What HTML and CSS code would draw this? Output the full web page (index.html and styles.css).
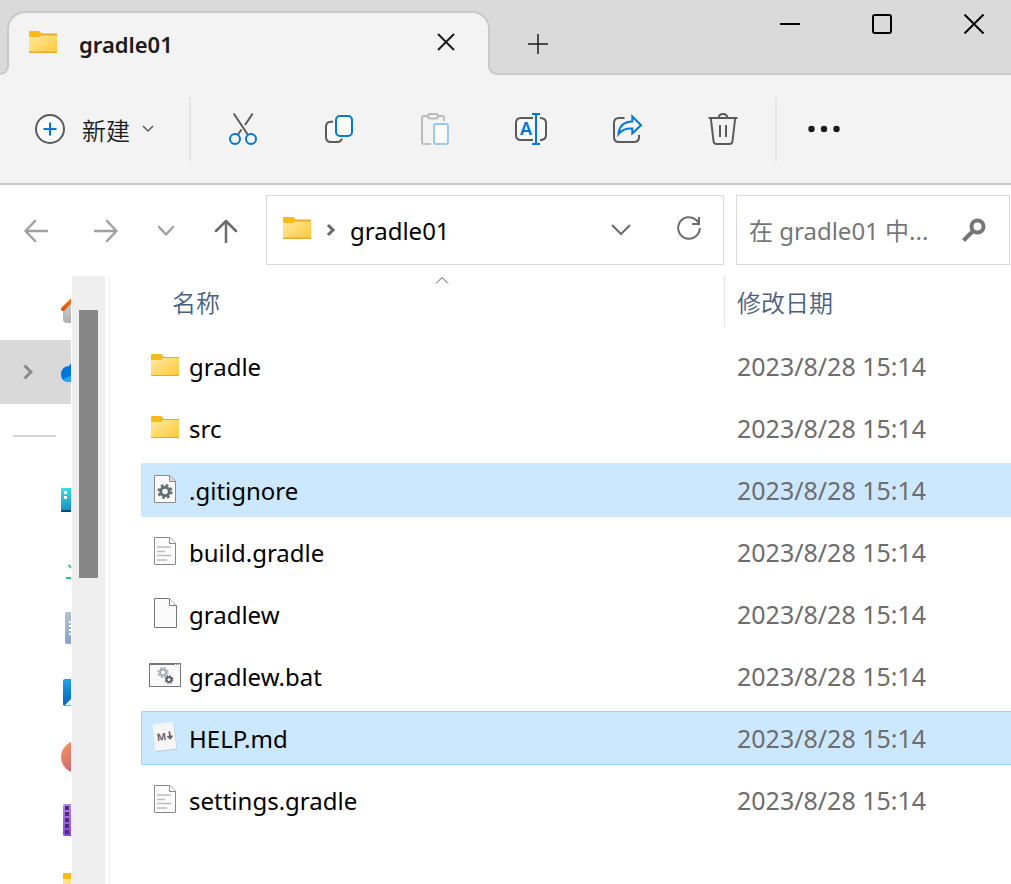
FILE: index.html
```html
<!DOCTYPE html>
<html lang="zh-CN">
<head>
<meta charset="utf-8">
<title>gradle01</title>
<link rel="stylesheet" href="styles.css">
</head>
<body>
<svg class="defs" aria-hidden="true">
  <defs>
    <linearGradient id="gold" x1="0" y1="0" x2="1" y2="1"><stop offset="0" stop-color="#ffe9a2"/><stop offset="1" stop-color="#ffc937"/></linearGradient>
    <linearGradient id="roof" x1="0" y1="1" x2="1" y2="0"><stop offset="0" stop-color="#dd5a0b"/><stop offset="1" stop-color="#ff9a1e"/></linearGradient>
    <linearGradient id="wall" x1="0" y1="0" x2="0" y2="1"><stop offset="0" stop-color="#d6d6d6"/><stop offset="1" stop-color="#b0b0b0"/></linearGradient>
    <linearGradient id="teal" x1="0" y1="0" x2="0.4" y2="1"><stop offset="0" stop-color="#3fe0e8"/><stop offset="1" stop-color="#1583c0"/></linearGradient>
    <linearGradient id="steel" x1="0" y1="0" x2="0" y2="1"><stop offset="0" stop-color="#b4c3d6"/><stop offset="1" stop-color="#88a4c4"/></linearGradient>
    <linearGradient id="sky" x1="0" y1="0" x2="0" y2="1"><stop offset="0" stop-color="#1fa0e6"/><stop offset="1" stop-color="#0a62b8"/></linearGradient>
    <linearGradient id="coral" x1="0" y1="0" x2="1" y2="1"><stop offset="0" stop-color="#f59a5c"/><stop offset="1" stop-color="#b74a86"/></linearGradient>
    <linearGradient id="violet" x1="0" y1="0" x2="0" y2="1"><stop offset="0" stop-color="#bb80f5"/><stop offset="1" stop-color="#8a44e0"/></linearGradient>
    <symbol id="folder" viewBox="0 0 28 22">
      <path d="M0 1q0-1 1-1h8.500q1 0 1.700.8l1.800 2.200h14q1 0 1 1v4H0z" fill="#f9b919"/>
      <path d="M0 6h9.500q1 0 1.700-.8l1.300-1.700h14.500q1 0 1 1V21q0 1-1 1H1q-1 0-1-1z" fill="url(#gold)"/>
      <path d="M12.500 3.500H28M0 21.500h28" stroke="#e8a92c" fill="none"/>
    </symbol>
    <symbol id="textfile" viewBox="0 0 22 28">
      <path d="M.5.500h15.500l5.500 5.500v21.500H.5z" fill="#fbfbfb" stroke="#8a8a8a"/>
      <path d="M15.500.500v6h6" fill="#fff" stroke="#8a8a8a"/>
      <path d="M3 10h14M3 14.500h8M3 18.500h14M3 23h10" stroke="#bdbdbd" stroke-width="1.500"/>
    </symbol>
  </defs>
</svg>

<header class="titlebar">
  <div class="edge edge-left"></div>
  <div class="tab">
    <svg class="folder" aria-hidden="true"><use href="#folder"/></svg>
    <span class="tab-title">gradle01</span>
    <button class="tab-close" aria-label="关闭标签页"><svg width="18" height="18" viewBox="0 0 18 18"><path d="M1 1l16 16M17 1L1 17"/></svg></button>
  </div>
  <div class="edge edge-right">
    <button class="new-tab" aria-label="新标签页"><svg width="20" height="20" viewBox="0 0 20 20"><path d="M10 0v20M0 10h20"/></svg></button>
  </div>
  <div class="controls">
    <button aria-label="最小化"><svg width="20" height="20" viewBox="0 0 20 20"><path d="M0 10h20"/></svg></button>
    <button aria-label="最大化"><svg width="20" height="20" viewBox="0 0 20 20"><rect x="1" y="1" width="18" height="18" rx="2"/></svg></button>
    <button class="close" aria-label="关闭"><svg width="20" height="20" viewBox="0 0 20 20"><path d="M.5.500l19 19M19.500.500l-19 19"/></svg></button>
  </div>
</header>

<div class="toolbar" role="toolbar">
  <button class="new">
    <svg width="30" height="30" viewBox="0 0 30 30"><circle cx="15" cy="15" r="14" fill="#fbfbfb"/><path class="blue" d="M15 8.500v13M8.500 15h13"/></svg>
    <span>新建</span>
    <svg class="thin" width="12" height="8" viewBox="0 0 12 8"><path d="M1 1l5 5 5-5"/></svg>
  </button>
  <span class="divider"></span>
  <button class="tool" aria-label="剪切"><svg width="32" height="32" viewBox="0 0 32 32"><path d="M6.700.500l14 21M25.700.500L18 12M14.500 16.500l-3.500 5"/><g class="blue"><circle cx="8" cy="26" r="5"/><circle cx="24" cy="26" r="5"/></g></svg></button>
  <button class="tool" aria-label="复制"><svg width="32" height="32" viewBox="0 0 32 32"><path fill="#fbfbfb" d="M10 8.700H8q-5 0-5 5V24q0 5 5 5h6q4 0 5-3.500"/><rect class="blue" x="13" y="3" width="16" height="20" rx="4" fill="#fbfbfb"/></svg></button>
  <button class="tool off" aria-label="粘贴" disabled><svg width="32" height="32" viewBox="0 0 32 32"><path d="M9 3H5q-2 0-2 2v24q0 2 2 2h7M19.500 3H23q2 0 2 2v3"/><rect x="9" y="1" width="10" height="4.500" rx="2.200"/><rect class="blue" x="15" y="11" width="14" height="20" rx="2" fill="#fbfbfb"/></svg></button>
  <button class="tool" aria-label="重命名"><svg width="32" height="32" viewBox="0 0 32 32"><path fill="#fbfbfb" d="M18 5H6q-5 0-5 5v12q0 5 5 5h12M25 5q6 0 6 5v12q0 5-6 5"/><path class="blue" d="M21 1v30M17 1h8M17 31h8"/><text x="11" y="22" text-anchor="middle">A</text></svg></button>
  <button class="tool" aria-label="共享"><svg width="32" height="32" viewBox="0 0 32 32"><path d="M13.500 5H8q-5 0-5 5v14q0 5 5 5h15q5 0 5-5v-2"/><path class="blue" fill="#fbfbfb" d="M21.300 3.500L30 12.200 21.300 20.500v-5Q12 15 7.500 21 8.500 9 21.300 8.500z"/></svg></button>
  <button class="tool" aria-label="删除"><svg width="32" height="32" viewBox="0 0 32 32"><path d="M1.500 5h29M11.500 5q.5-4 4.500-4t4.500 4M3.800 5L6.500 28q.3 3 3 3h13q2.700 0 3-3L28.200 5M13 12v12M19 12v12"/></svg></button>
  <span class="divider"></span>
  <button class="more" aria-label="查看更多"><svg width="32" height="8" viewBox="0 0 32 8"><g fill="#1b1b1b"><circle cx="3.500" cy="4" r="3.200"/><circle cx="16" cy="4" r="3.200"/><circle cx="28.500" cy="4" r="3.200"/></g></svg></button>
</div>

<div class="navbar">
  <button class="nav" aria-label="后退"><svg width="24" height="24" viewBox="0 0 24 24"><path d="M23 12H1.500M11 2L1.500 12l9.500 10"/></svg></button>
  <button class="nav" aria-label="前进"><svg width="24" height="24" viewBox="0 0 24 24"><path d="M1 12h21.500M13 2l9.500 10L13 22"/></svg></button>
  <button class="nav recent" aria-label="最近浏览的位置"><svg width="18" height="12" viewBox="0 0 18 12"><path d="M2 2l7 7.500L16 2"/></svg></button>
  <button class="nav up" aria-label="上移"><svg width="24" height="24" viewBox="0 0 24 24"><path d="M12 23V2M2 12L12 2l10 10"/></svg></button>
  <div class="address">
    <svg class="folder" aria-hidden="true"><use href="#folder"/></svg>
    <svg class="crumb" width="10" height="14" viewBox="0 0 10 14"><path d="M2 2l5 5-5 5"/></svg>
    <span class="path">gradle01</span>
    <button class="box-button" aria-label="以前的位置"><svg width="20" height="12" viewBox="0 0 20 12"><path d="M1 1l9 9 9-9"/></svg></button>
    <button class="box-button refresh" aria-label="刷新"><svg width="24" height="24" viewBox="0 0 24 24"><path d="M22.800 12a10.800 10.800 0 1 1-3.500-8l2.700 3M22 1v7h-7"/></svg></button>
  </div>
  <div class="search">
    <input type="text" aria-label="搜索" placeholder="在 gradle01 中...">
    <button aria-label="搜索"><svg width="24" height="24" viewBox="0 0 24 24"><circle cx="15.500" cy="8.500" r="6"/><path d="M11 13L1.500 22.500"/></svg></button>
  </div>
</div>

<main class="content">
  <nav class="sidebar" aria-label="导航窗格">
    <div class="item"><svg width="32" height="32" viewBox="0 0 32 32"><path d="M2 15L16 3l14 12v12q0 4-4 4H6q-4 0-4-4z" fill="url(#wall)"/><path d="M2 17L16 3l14 14" fill="none" stroke="url(#roof)" stroke-width="4" stroke-linecap="round"/></svg></div>
    <div class="item selected"><svg class="caret" width="10" height="16" viewBox="0 0 10 16"><path d="M1.500 1.500L8 8l-6.500 6.500"/></svg><svg width="32" height="32" viewBox="0 0 32 32"><path d="M0 18a8 8 0 0 1 8-8Q12 4 18 6q6 1 8 7 6 2 6 7-1 6-7 6H8q-8 0-8-8z" fill="#0277d8"/><path d="M2 23l12-5 14 7q-2 1-4 1H8q-4 0-6-3z" fill="#29a5ee"/></svg></div>
    <div class="rule"></div>
    <div class="item"><svg width="32" height="32" viewBox="0 0 32 32"><rect y="4" width="32" height="24" rx="1" fill="url(#teal)"/><path d="M0 26h32v1q0 1-1 1H1q-1 0-1-1z" fill="#0c4a6e"/><path d="M3 7h3v3H3zM3 12h3v3H3z" fill="#fff"/></svg></div>
    <div class="item"><svg width="32" height="32" viewBox="0 0 32 32"><path d="M16 3v22M7.500 17l8.500 8 8.500-8M5 30h22" fill="none" stroke="#2dc491" stroke-width="2"/></svg></div>
    <div class="item"><svg width="32" height="32" viewBox="0 0 32 32"><rect x="4" width="24" height="32" rx="2" fill="url(#steel)"/><path d="M8 10h16M8 14h16M8 18h16M8 22h16" stroke="#fff" stroke-width="2"/></svg></div>
    <div class="item"><svg width="32" height="32" viewBox="0 0 32 32"><rect x="2" y="3" width="28" height="27" rx="2" fill="url(#sky)"/><path d="M3.500 29.500L16 17l12.500 12.500z" fill="#e9f3fb"/></svg></div>
    <div class="item"><svg width="32" height="32" viewBox="0 0 32 32"><circle cx="16" cy="17" r="16" fill="url(#coral)"/></svg></div>
    <div class="item"><svg width="32" height="32" viewBox="0 0 32 32"><rect x="2" width="28" height="32" rx="2" fill="url(#violet)"/><path d="M6 2v30" stroke="#453266" stroke-width="4" stroke-dasharray="4 2"/></svg></div>
    <div class="item"><svg width="32" height="32" viewBox="0 0 32 32"><use href="#folder" x="2" y="5" width="28" height="22"/></svg></div>
  </nav>
  <div class="scrollbar"><div class="thumb"></div></div>
  <section class="files">
    <table>
      <thead>
        <tr>
          <th scope="col" aria-sort="ascending">名称<svg class="sort" width="14" height="8" viewBox="0 0 14 8"><path d="M1 7.500l6-6 6 6"/></svg></th>
          <th scope="col">修改日期</th>
        </tr>
      </thead>
      <tbody>
        <tr><td><span class="icon"><svg class="folder"><use href="#folder"/></svg></span>gradle</td><td>2023/8/28 15:14</td></tr>
        <tr><td><span class="icon"><svg class="folder"><use href="#folder"/></svg></span>src</td><td>2023/8/28 15:14</td></tr>
        <tr class="picked"><td><span class="icon"><svg width="22" height="28" viewBox="0 0 22 28"><path d="M.5.500h15.500l5.500 5.500v21.500H.5z" fill="#fbfbfb" stroke="#8a8a8a"/><path d="M15.500.500v6h6" fill="#ddd" stroke="#8a8a8a"/><g fill="none" stroke="#5f6f75"><circle cx="11" cy="16.500" r="4.300" stroke-width="3"/><circle cx="11" cy="16.500" r="6.500" stroke-width="2.200" stroke-dasharray="2.700 2.400"/></g></svg></span>.gitignore</td><td>2023/8/28 15:14</td></tr>
        <tr><td><span class="icon"><svg width="22" height="28"><use href="#textfile"/></svg></span>build.gradle</td><td>2023/8/28 15:14</td></tr>
        <tr><td><span class="icon"><svg width="24" height="30" viewBox="0 0 24 30"><path d="M1.500.500h15l7 7v22h-22z" fill="#fbfbfb" stroke="#777"/><path d="M16.500.500v7h7" fill="#fff" stroke="#777"/></svg></span>gradlew</td><td>2023/8/28 15:14</td></tr>
        <tr><td><span class="icon"><svg width="32" height="24" viewBox="0 0 32 24"><rect x=".5" y=".5" width="31" height="23" fill="#fbfbfb" stroke="#777"/><path d="M1 1h24" stroke="#777" stroke-width="2"/><path d="M25 1.500h6" stroke="#777" stroke-dasharray="1 1"/><g fill="none" stroke="#a3afb7"><circle cx="14" cy="9.500" r="3" stroke-width="2"/><circle cx="14" cy="9.500" r="4.700" stroke-width="1.800" stroke-dasharray="2 1.690"/></g><g fill="none" stroke="#4e5a61"><circle cx="20" cy="16.500" r="2.400" stroke-width="1.700"/><circle cx="20" cy="16.500" r="3.700" stroke-width="1.300" stroke-dasharray="1.600 1.300"/></g></svg></span>gradlew.bat</td><td>2023/8/28 15:14</td></tr>
        <tr class="picked focused"><td><span class="icon"><svg width="28" height="30" viewBox="0 0 28 30"><g transform="rotate(-7 14 15)"><rect x="3.500" y="2" width="21" height="27" rx="1" fill="#b9cbd9"/><rect x="3" y="1" width="21" height="27" rx="1" fill="#f6f6f6"/><text class="mark" x="10.500" y="18" text-anchor="middle">M</text><path d="M19 10v7M16.500 14.500l2.500 2.500 2.500-2.500" fill="none" stroke="#666" stroke-width="1.800"/></g></svg></span>HELP.md</td><td>2023/8/28 15:14</td></tr>
        <tr><td><span class="icon"><svg width="22" height="28"><use href="#textfile"/></svg></span>settings.gradle</td><td>2023/8/28 15:14</td></tr>
      </tbody>
    </table>
  </section>
</main>
</body>
</html>
```
FILE: styles.css
```css
* { box-sizing: border-box; }

body {
  margin: 0;
  height: 100vh;
  display: flex;
  flex-direction: column;
  overflow: hidden;
  background: #fff;
  color: #000;
  font-family: "Noto Sans", "Noto Sans CJK SC", sans-serif;
  font-size: 24px;
}

button {
  display: flex;
  align-items: center;
  justify-content: center;
  margin: 0;
  padding: 0;
  border: 0;
  background: none;
  color: inherit;
  font: inherit;
}

svg { display: block; flex: none; }
.defs { position: absolute; width: 0; height: 0; }
.folder { width: 28px; height: 22px; }

/* Title bar */
.titlebar {
  display: flex;
  flex: none;
  height: 75px;
  background: linear-gradient(#f3f3f3, #f3f3f3) bottom / 100% 9px no-repeat #dadada;
}
.titlebar svg { fill: none; stroke: #1b1b1b; stroke-width: 2; }
.titlebar .folder { stroke: none; }
.edge {
  align-self: flex-end;
  z-index: 1;
  height: 45px;
  border: 0 solid #c9c9c9;
  border-bottom-width: 2px;
  background: #dadada;
}
.edge-left { width: 9px; border-right-width: 2px; border-bottom-right-radius: 9px; }
.edge-right { flex: 1; margin-left: -2px; border-left-width: 2px; border-bottom-left-radius: 9px; }
.tab {
  display: flex;
  flex: 0 1 483px;
  align-items: center;
  margin: 11px 0 8px -2px;
  padding: 4px 33px 0 20px;
  border: 2px solid #c9c9c9;
  border-bottom: 0;
  border-radius: 18px 18px 0 0;
  background: #f3f3f3;
}
.tab-title {
  flex: 1;
  margin-left: 22px;
  padding-top: 4px;
  color: #1b1b1b;
  font-size: 22px;
  font-weight: 600;
}
.new-tab { width: 96px; height: 28px; }
.titlebar .new-tab svg { stroke-width: 1.5; }
.controls {
  display: flex;
  align-items: flex-start;
  height: 73px;
  background: #dadada;
  box-shadow: 0 2px #c9c9c9;
}
.controls button { justify-content: flex-start; width: 92px; height: 48px; padding-left: 36px; }
.controls .close { width: 83px; }
.controls svg { stroke: #000; }

/* Command bar */
.toolbar {
  display: flex;
  flex: none;
  align-items: center;
  height: 110px;
  border-bottom: 2px solid #c9c9c9;
  background: #f3f3f3;
}
.toolbar svg { fill: none; stroke: #5a5a5a; stroke-width: 2; overflow: visible; }
.toolbar .blue { stroke: #0078d4; }
.toolbar text { fill: #0078d4; stroke: none; font-size: 18px; font-weight: 600; }
.toolbar .off svg { stroke: #bcbcbc; }
.toolbar .off .blue { stroke: #9ccaee; }
.toolbar .thin { stroke-width: 1.5; }
.new {
  justify-content: flex-start;
  gap: 12px;
  width: 189px;
  padding-left: 35px;
  color: #1b1b1b;
  font-weight: 350;
}
.new span { margin-left: 5px; }
.divider { width: 2px; height: 64px; background: #e5e5e5; }
.divider + button { margin-left: 4px; }
.tool { width: 96px; height: 64px; }
.tool + .divider { margin-left: 4px; }
.more { width: 86px; height: 64px; }
.toolbar .more svg { stroke: none; }

/* Address row */
.navbar { display: flex; flex: none; padding: 10px 1px 11px; }
.navbar svg { fill: none; stroke: #6b6b6b; stroke-width: 2; }
.navbar .folder { margin-bottom: 4px; stroke: none; }
.nav { width: 70px; height: 72px; margin-bottom: -2px; }
.navbar .nav svg { stroke: #a0a0a0; stroke-width: 2.5; stroke-linecap: round; stroke-linejoin: round; }
.nav.recent { width: 50px; }
.nav.up { margin-right: 5px; }
.navbar .nav.up svg { stroke: #6b6b6b; }
.address, .search {
  display: flex;
  align-items: center;
  height: 70px;
  border: 1px solid #d9d9d9;
  background: #fff;
}
.address { flex: 1; min-width: 0; padding-left: 16px; }
.navbar .crumb { margin: 0 14px 0 15px; stroke-width: 3; }
.address .path { flex: 1; }
.address .box-button { width: 68px; height: 68px; }
.address .refresh { padding-bottom: 4px; }
.search { width: 274px; margin-left: 12px; }
.search input {
  flex: 1;
  min-width: 0;
  height: 68px;
  padding: 0 0 0 12px;
  border: 0;
  outline: 0;
  background: none;
  font: inherit;
}
.search input::placeholder { color: #767676; opacity: 1; }
.search button { width: 70px; height: 68px; }
.navbar .search svg { stroke: #767676; stroke-width: 4; }

/* Navigation pane */
.content { display: flex; flex: 1; min-height: 0; }
.sidebar { width: 71px; margin-right: 1px; overflow: hidden; }
.item { display: flex; align-items: center; height: 64px; padding-left: 61px; }
.item.selected { gap: 28px; padding-left: 23px; background: #d9d9d9; }
.caret { fill: none; stroke: #8a8a8a; stroke-width: 3; }
.rule { height: 2px; margin: 31px 15px 31px 13px; background: #d5d5d5; }
.scrollbar { width: 33px; padding: 34px 7px 0; background: #efefef; }
.thumb { width: 19px; height: 268px; background: #868686; }

/* File list */
.files { flex: 1; min-width: 0; margin-left: 3px; padding-left: 31px; border-left: 2px solid #f6f6f6; overflow: hidden; }
table { display: block; }
thead, tbody { display: block; }
tr { display: grid; grid-template-columns: 583px 1fr; }
thead tr { height: 51px; margin-bottom: 12px; }
th {
  position: relative;
  padding: 8px 0 0 12px;
  color: #4a5f7f;
  font-weight: 350;
  text-align: left;
}
th:first-child { margin-left: 19px; }
th + th { border-left: 1px solid #e2e2e2; }
.sort { position: absolute; top: 0; left: 50%; margin-left: -7px; fill: none; stroke: #5a5a5a; }
tbody tr {
  height: 54px;
  margin-bottom: 8px;
  border: 1px solid transparent;
  border-right: 0;
  border-radius: 2px 0 0 2px;
}
td { display: flex; align-items: center; padding: 0; }
td + td { padding-left: 12px; color: #6d6d6d; font-size: 25px; }
.icon { display: flex; justify-content: center; width: 32px; margin: 0 8px 2px 7px; }
.picked { border-color: #cce8ff; background: #cce8ff; }
.focused { border-color: #99d1ff; }
.mark { fill: #666; font-size: 10px; font-weight: 700; }
```
